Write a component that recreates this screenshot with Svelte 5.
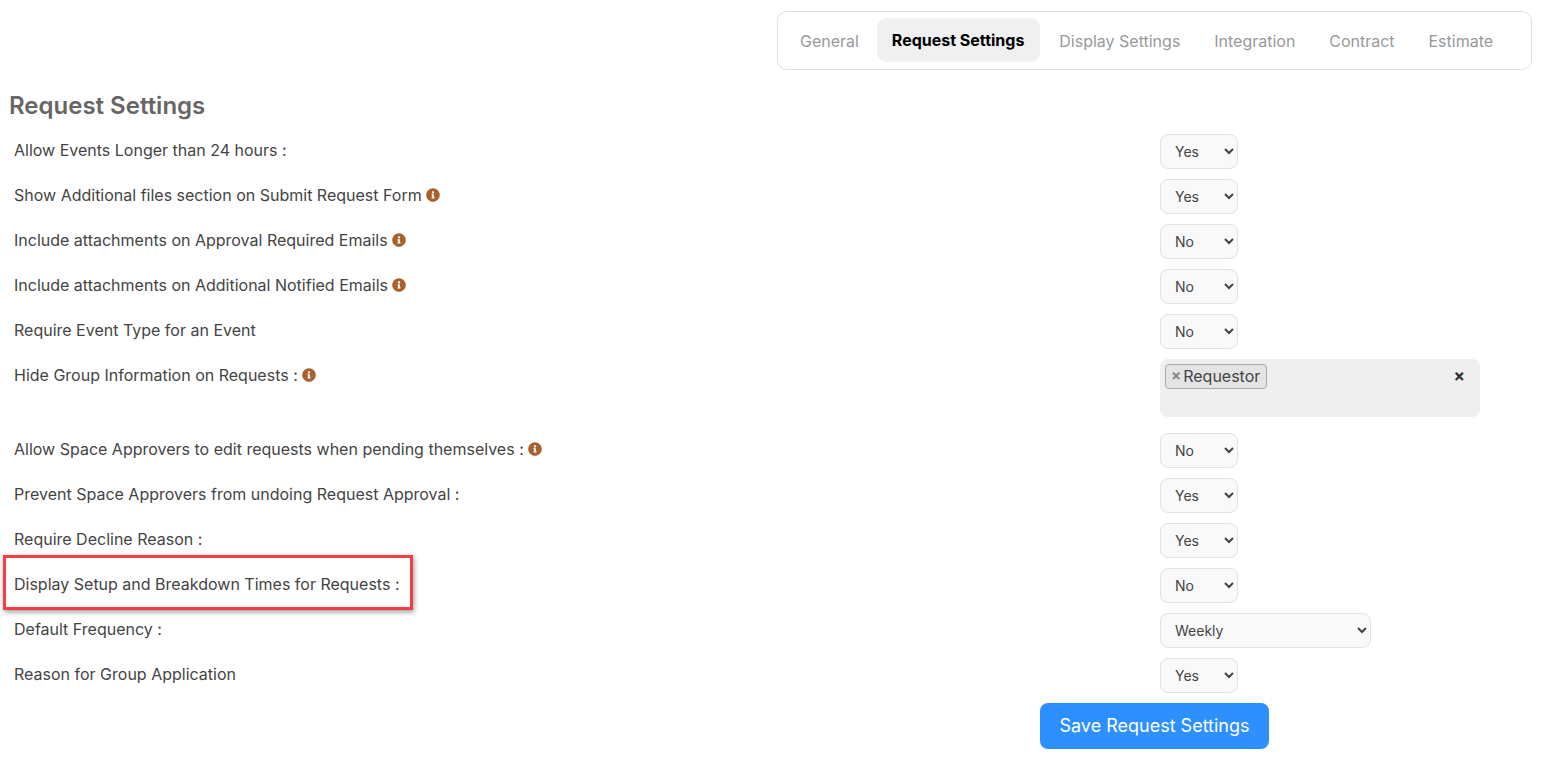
<script>
	const infoPath =
		'M256 8C119.043 8 8 119.083 8 256c0 136.997 111.043 248 248 248s248-111.003 248-248C504 119.083 392.957 8 256 8zm0 110c23.196 0 42 18.804 42 42s-18.804 42-42 42-42-18.804-42-42 18.804-42 42-42zm56 254c0 6.627-5.373 12-12 12h-88c-6.627 0-12-5.373-12-12v-24c0-6.627 5.373-12 12-12h12v-64h-12c-6.627 0-12-5.373-12-12v-24c0-6.627 5.373-12 12-12h64c6.627 0 12 5.373 12 12v100h12c6.627 0 12 5.373 12 12v24z';

	const tabs = ['General', 'Request Settings', 'Display Settings', 'Integration', 'Contract', 'Estimate'];

	const rows = [
		{ label: 'Allow Events Longer than 24 hours :', value: 'Yes' },
		{ label: 'Show Additional files section on Submit Request Form', info: true, value: 'Yes' },
		{ label: 'Include attachments on Approval Required Emails', info: true, value: 'No' },
		{ label: 'Include attachments on Additional Notified Emails', info: true, value: 'No' },
		{ label: 'Require Event Type for an Event', value: 'No' },
		{ label: 'Hide Group Information on Requests :', info: true, multi: true },
		{ label: 'Allow Space Approvers to edit requests when pending themselves :', info: true, value: 'No' },
		{ label: 'Prevent Space Approvers from undoing Request Approval :', value: 'Yes' },
		{ label: 'Require Decline Reason :', value: 'Yes' },
		{ label: 'Display Setup and Breakdown Times for Requests :', value: 'No', marked: true },
		{ label: 'Default Frequency :', value: 'Weekly', wide: true },
		{ label: 'Reason for Group Application', value: 'Yes' }
	];
</script>

<div class="page">
	<div class="tabs-wrap">
		<nav class="tabs">
			{#each tabs as tab, i}
				<span class="tab" class:active={i === 1}>{tab}</span>
			{/each}
		</nav>
	</div>

	<h2>Request Settings</h2>

	<div class="rows">
		{#each rows as row}
			<div class="row">
				<div class="label">
					{row.label}
					{#if row.info}
						<svg class="info" viewBox="0 0 512 512"><path d={infoPath} /></svg>
					{/if}
				</div>
				<div>
					{#if row.multi}
						<div class="multi">
							<span class="chip"><span class="chip-x">×</span>Requestor</span>
							<span class="clear">×</span>
						</div>
					{:else if row.wide}
						<select class="wide">
							<option>Daily</option>
							<option selected>Weekly</option>
							<option>Monthly</option>
						</select>
					{:else}
						<select value={row.value}>
							<option>Yes</option>
							<option>No</option>
						</select>
					{/if}
				</div>
				{#if row.marked}
					<div class="marker"></div>
				{/if}
			</div>
		{/each}
	</div>

	<div class="actions">
		<button>Save Request Settings</button>
	</div>
</div>

<style>
	:global(body) {
		background: #fff;
		font-family: Inter, 'Liberation Sans', sans-serif;
		color: #444;
	}

	.page {
		height: 776px;
		overflow: hidden;
		box-sizing: border-box;
		padding-top: 11px;
	}

	.tabs-wrap {
		display: flex;
		justify-content: flex-end;
		padding-right: 32px;
	}

	.tabs {
		width: 755px;
		height: 59px;
		box-sizing: border-box;
		border: 1px solid #dedede;
		border-radius: 10px;
		padding: 6px 7px;
		display: flex;
		align-items: flex-start;
		gap: 3.9px;
	}

	.tab {
		padding: 0 15px;
		height: 44px;
		line-height: 46px;
		font-size: 16px;
		color: #999;
		border-radius: 10px;
		white-space: nowrap;
	}

	.tab.active {
		padding-right: 16px;
		background: #f0f0f0;
		color: #000;
		font-weight: 700;
		line-height: 44px;
		margin-left: -1px;
	}

	h2 {
		margin: 20px 0 0 9px;
		height: 44px;
		line-height: 32px;
		font-size: 24px;
		font-weight: 600;
		color: #666;
	}

	.row {
		position: relative;
		display: grid;
		grid-template-columns: 1146px 1fr;
		padding-left: 14px;
		margin-bottom: 10px;
	}

	.label {
		font-size: 16px;
		line-height: 33px;
		color: #444;
		white-space: nowrap;
	}

	.info {
		width: 14px;
		height: 14px;
		fill: #a8602c;
		vertical-align: -1px;
	}

	select {
		display: block;
		width: 78px;
		height: 35px;
		box-sizing: border-box;
		padding: 0 10px;
		border: 1px solid #e2e2e2;
		border-radius: 8px;
		background-color: #f9f9f9;
		color: #444;
		font-family: inherit;
		font-size: 14px;
	}

	select.wide {
		width: 211px;
	}

	.multi {
		position: relative;
		width: 320px;
		height: 58px;
		box-sizing: border-box;
		padding: 5px;
		margin-bottom: 6px;
		background: #efefef;
		border-radius: 8px;
	}

	.chip {
		display: inline-flex;
		align-items: center;
		height: 25px;
		box-sizing: border-box;
		padding: 0 6px 2px 5px;
		background: #e4e4e4;
		border: 1px solid #aaa;
		border-radius: 4px;
		font-size: 16px;
		color: #444;
	}

	.chip-x {
		color: #888;
		font-weight: 700;
		font-size: 15px;
		margin-right: 2px;
	}

	.clear {
		position: absolute;
		top: 5px;
		right: 15px;
		font-size: 17px;
		line-height: 25px;
		font-weight: 700;
		color: #333;
	}

	.marker {
		position: absolute;
		left: 3px;
		top: -13px;
		width: 410px;
		height: 55px;
		box-sizing: border-box;
		border: 3px solid #f63c44;
		box-shadow: 1px 2px 5px rgba(0, 0, 0, 0.4);
		pointer-events: none;
	}

	.actions {
		padding-left: 1040px;
	}

	button {
		width: 229px;
		height: 46px;
		border: none;
		border-radius: 8px;
		background: #2e8fff;
		color: #fff;
		font-family: inherit;
		font-size: 18px;
		font-weight: 400;
		padding-bottom: 2px;
	}
</style>
